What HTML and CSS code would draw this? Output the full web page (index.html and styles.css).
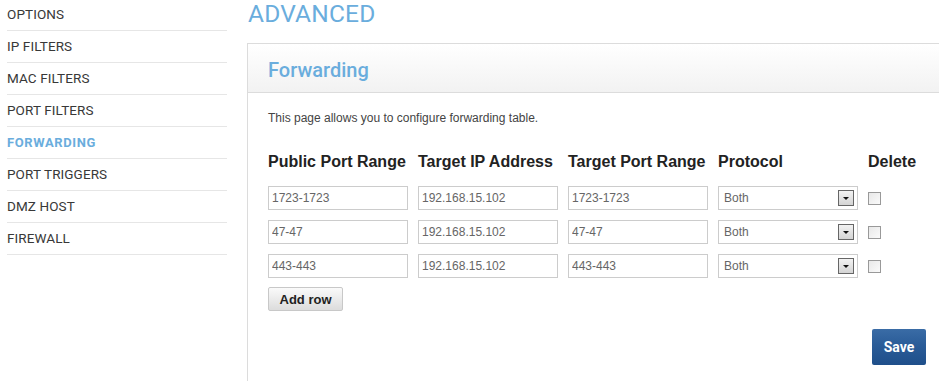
FILE: index.html
```html
<!DOCTYPE html>
<html lang="en">
<head>
    <meta charset="UTF-8">
    <title>Advanced - Forwarding</title>
    <link rel="stylesheet" href="styles.css">
</head>
<body>
    <div class="layout">
        <ul class="side-nav">
            <li>OPTIONS</li>
            <li>IP FILTERS</li>
            <li>MAC FILTERS</li>
            <li>PORT FILTERS</li>
            <li class="active">FORWARDING</li>
            <li>PORT TRIGGERS</li>
            <li>DMZ HOST</li>
            <li>FIREWALL</li>
        </ul>

        <div class="main">
            <h1 class="page-title">ADVANCED</h1>
            <div class="panel">
                <div class="panel-head">
                    <h2>Forwarding</h2>
                </div>
                <div class="panel-body">
                    <p class="intro">This page allows you to configure forwarding table.</p>

                    <div class="fw-table">
                        <div class="th">Public Port Range</div>
                        <div class="th">Target IP Address</div>
                        <div class="th">Target Port Range</div>
                        <div class="th">Protocol</div>
                        <div class="th">Delete</div>

                        <input type="text" value="1723-1723">
                        <input type="text" value="192.168.15.102">
                        <input type="text" value="1723-1723">
                        <div class="select-box">Both<span class="arrow"></span></div>
                        <div class="chk-cell"><span class="chk"></span></div>

                        <input type="text" value="47-47">
                        <input type="text" value="192.168.15.102">
                        <input type="text" value="47-47">
                        <div class="select-box">Both<span class="arrow"></span></div>
                        <div class="chk-cell"><span class="chk"></span></div>

                        <input type="text" value="443-443">
                        <input type="text" value="192.168.15.102">
                        <input type="text" value="443-443">
                        <div class="select-box">Both<span class="arrow"></span></div>
                        <div class="chk-cell"><span class="chk"></span></div>
                    </div>

                    <button class="btn-add">Add row</button>

                    <div class="actions">
                        <button class="btn-save">Save</button>
                    </div>
                </div>
            </div>
        </div>
    </div>
</body>
</html>
```

FILE: styles.css
```css
body {
    margin: 0;
    background: #fff;
    overflow: hidden;
    font-family: "Liberation Sans", Arial, sans-serif;
}

.layout {
    display: flex;
    align-items: flex-start;
}

/* sidebar */
.side-nav {
    list-style: none;
    margin: -1px 0 0 0;
    padding: 0 0 0 7px;
    width: 220px;
    flex: none;
}

.side-nav li {
    font-family: Roboto, "Liberation Sans", sans-serif;
    font-size: 13.5px;
    color: #383838;
    line-height: 31px;
    border-bottom: 1px solid #e6e6e6;
    letter-spacing: 0.1px;
}

.side-nav li.active {
    color: #6aaddd;
    font-weight: bold;
    font-size: 13px;
    letter-spacing: 0.6px;
}

/* main area */
.main {
    margin-left: 20px;
    width: 720px;
    flex: none;
}

.page-title {
    margin: 0;
    height: 43px;
    line-height: 28px;
    font-family: Roboto, "Liberation Sans", sans-serif;
    font-weight: 400;
    font-size: 24.5px;
    color: #6aaddd;
    letter-spacing: 0.2px;
    padding-left: 1px;
}

.panel {
    border: 1px solid #dcdcdc;
    border-bottom: none;
    height: 338px;
}

.panel-head {
    height: 48px;
    border-bottom: 1px solid #dcdcdc;
    background: linear-gradient(#ffffff, #f2f2f2);
    padding-left: 20px;
}

.panel-head h2 {
    margin: 0;
    line-height: 52px;
    font-family: Roboto, "Liberation Sans", sans-serif;
    font-weight: 500;
    font-size: 20px;
    color: #6aaddd;
}

.panel-body {
    padding: 18px 20px 0 20px;
    width: 660px;
}

.intro {
    margin: 0;
    font-size: 12px;
    line-height: 14px;
    color: #444;
}

.fw-table {
    display: grid;
    grid-template-columns: 140px 140px 140px 140px 50px;
    column-gap: 10px;
    row-gap: 10px;
    margin-top: 28px;
}

.th {
    font-size: 16px;
    font-weight: bold;
    color: #222;
    line-height: 18px;
    margin-bottom: 5px;
}

.fw-table input {
    box-sizing: border-box;
    width: 140px;
    height: 24px;
    margin: 0;
    border: 1px solid #ccc;
    padding: 0 3px;
    font-family: "Liberation Sans", Arial, sans-serif;
    font-size: 12px;
    color: #666;
    outline: none;
}

.select-box {
    box-sizing: border-box;
    position: relative;
    height: 24px;
    border: 1px solid #ccc;
    padding-left: 5px;
    font-size: 12px;
    line-height: 22px;
    color: #666;
}

.select-box .arrow {
    position: absolute;
    right: 3px;
    top: 3px;
    width: 14px;
    height: 14px;
    border: 1px solid #666;
    background: linear-gradient(#f2f2f2, #d4d4d4);
}

.select-box .arrow::after {
    content: "";
    position: absolute;
    left: 4px;
    top: 6px;
    border-left: 3px solid transparent;
    border-right: 3px solid transparent;
    border-top: 3px solid #111;
}

.chk-cell {
    display: flex;
    align-items: center;
}

.chk {
    width: 11px;
    height: 11px;
    border: 1px solid #999;
    background: linear-gradient(135deg, #e8e8e8, #fafafa);
}

.btn-add {
    margin-top: 9px;
    width: 75px;
    height: 24px;
    border: 1px solid #c8c8c8;
    border-radius: 2px;
    background: linear-gradient(#fafafa, #dcdcdc);
    font-family: "Liberation Sans", Arial, sans-serif;
    font-size: 13px;
    font-weight: bold;
    color: #222;
    padding: 0;
}

.actions {
    display: flex;
    justify-content: flex-end;
    margin-top: 18px;
    padding-right: 2px;
}

.btn-save {
    width: 54px;
    height: 36px;
    border: none;
    border-radius: 2px;
    background: linear-gradient(#3a6ca6, #2a5c98 45%, #1f4f8a);
    color: #fff;
    font-family: Roboto, "Liberation Sans", sans-serif;
    font-size: 14px;
    font-weight: bold;
    padding: 0;
}
```
